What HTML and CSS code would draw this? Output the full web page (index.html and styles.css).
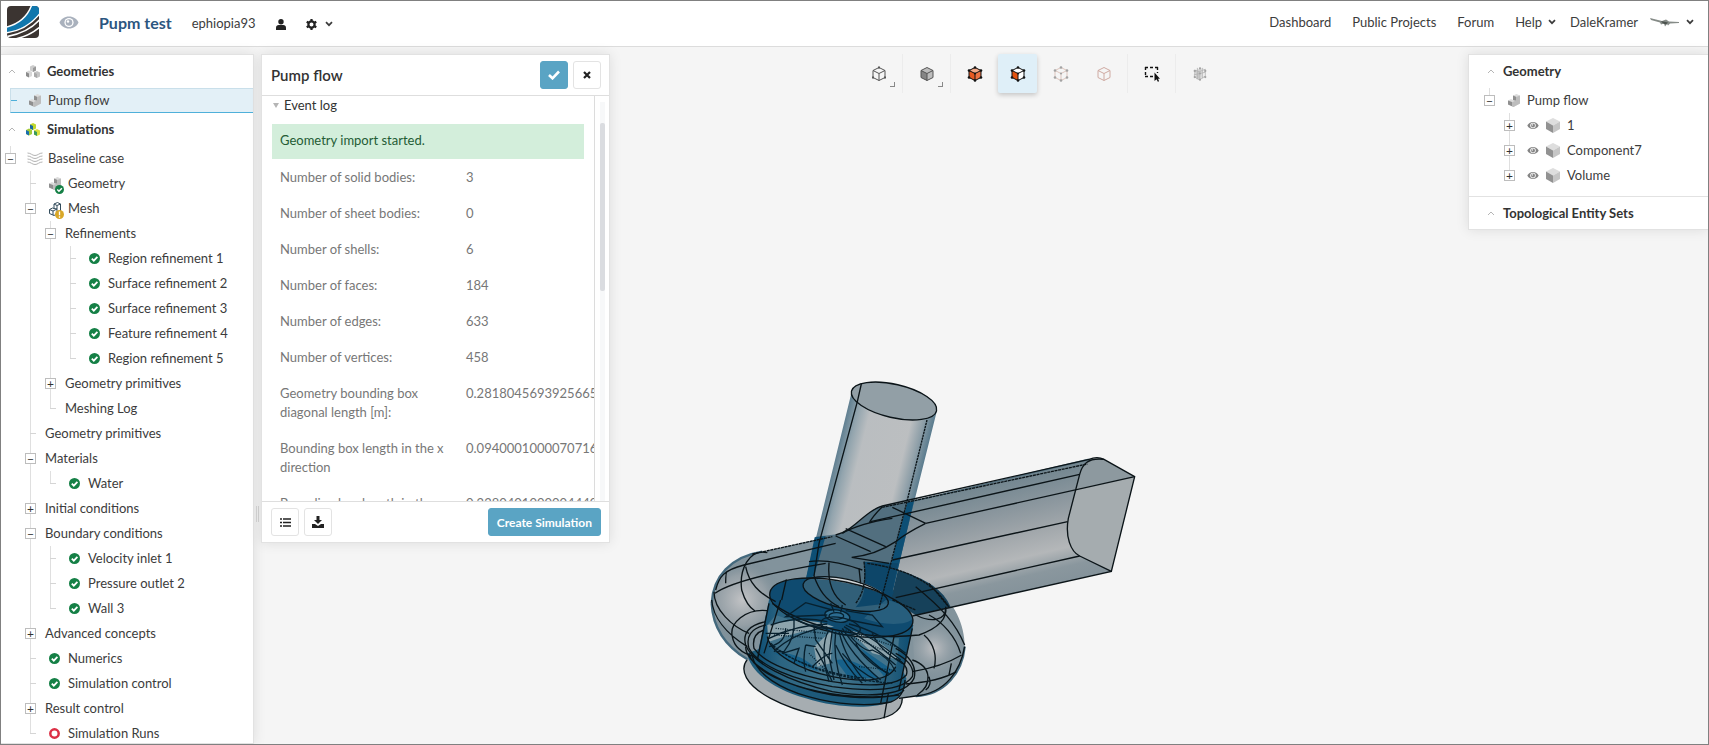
FILE: index.html
```html
<!DOCTYPE html>
<html lang="en">
<head>
  <meta charset="UTF-8" />
  <title>Pupm test</title>
  <link rel="stylesheet" href="styles.css">
</head>
<body>
  <!-- Icons -->
  <svg class="sprite" aria-hidden="true">
    <symbol id="chevron" viewBox="0 0 8 6"><path d="M1 1.200l3 3 3-3" fill="none" stroke="currentColor" stroke-width="1.700"/></symbol>
    <symbol id="caret" viewBox="0 0 8 5"><path d="M1 4l3-3 3 3" fill="none" stroke="#b5b5b5"/></symbol>
    <symbol id="eye" viewBox="0 0 20 13">
      <path d="M10 .5C5.500.5 2 3 .5 6.500 2 10 5.500 12.500 10 12.500s8-2.500 9.500-6C18 3 14.500.5 10 .5z" fill="currentColor"/>
      <circle cx="10" cy="6.500" r="4.600" fill="#fff"/><circle cx="10" cy="6.500" r="3.300" fill="currentColor"/><circle cx="9" cy="5.500" r="1.200" fill="#fff"/>
    </symbol>
    <symbol id="check" viewBox="0 0 11 11"><circle cx="5.500" cy="5.500" r="5.500" fill="#158046"/><path d="M2.800 5.600l2 2 3.600-3.700" fill="none" stroke="#fff" stroke-width="1.800"/></symbol>
    <symbol id="ring" viewBox="0 0 11 11"><circle cx="5.500" cy="5.500" r="4.200" fill="#fff" stroke="#dc2f45" stroke-width="2.500"/></symbol>
    <symbol id="cube" viewBox="0 0 14 15">
      <path d="M7 0l7 3.500-7 4-7-4z" fill="#dedede"/><path d="M0 3.500l7 4V15l-7-4z" fill="#929292"/><path d="M14 3.500l-7 4V15l7-4z" fill="#c6c6c6"/>
    </symbol>
    <symbol id="cubes" viewBox="0 0 14 13">
      <path d="M4 1.500L7 0l3 1.500v4L7 7 4 5.500z" fill="#ccc"/><path d="M7 3l3-1.500v4L7 7z" fill="#999"/>
      <path d="M0 7l3-1.500L6 7v4l-3 1.500L0 11z" fill="#d8d8d8"/><path d="M0 7l3 1.500v4L0 11z" fill="#8c8c8c"/>
      <path d="M8 7.500L11 6l3 1.500v4L11 13l-3-1.500z" fill="#c4c4c4"/><path d="M8 7.500L11 9v4l-3-1.500z" fill="#aaa"/>
    </symbol>
    <symbol id="cubes-color" viewBox="0 0 14 13">
      <path d="M4 1.500L7 0l3 1.500v4L7 7 4 5.500z" fill="#bfd730"/><path d="M4 1.500L7 3v4L4 5.500z" fill="#1768a5"/>
      <path d="M0 7l3-1.500L6 7v4l-3 1.500L0 11z" fill="#a5cb39"/><path d="M0 7l3 1.500v4L0 11z" fill="#1a6fae"/>
      <path d="M8 7.500L11 6l3 1.500v4L11 13l-3-1.500z" fill="#dbe042"/><path d="M8 7.500L11 9v4l-3-1.500z" fill="#3c9b5b"/>
    </symbol>
    <symbol id="part" viewBox="0 0 12 13">
      <path d="M5 1.500L8.500 0 12 1.500v8L5.500 13 0 10.500v-4l3-1.500 2 1z" fill="#dcdcdc"/>
      <path d="M5 1.500l3 1.300v4L5 6zM0 6.500L4 8v4.200L0 10.500z" fill="#8f8f8f"/><path d="M12 1.500L8 3v3.500L4 8.200v4.200l1.500.6L12 9.500z" fill="#bdbdbd"/>
    </symbol>
    <symbol id="mesh" viewBox="0 0 12 14">
      <path d="M5 2l3.500-1.500L11.500 2v8L5 13.500.5 11.500v-4l3-1.500L5 6.500zM5 2l3 1.500 3.500-1.500M8 3.500V7L4 9 .5 7.500M4 9v4M5 6.500L8 7M8 7v4.500" fill="none" stroke="#334c5c"/>
    </symbol>
    <symbol id="warn" viewBox="0 0 9 9"><circle cx="4.500" cy="4.500" r="4.500" fill="#d9a727"/><path d="M4.500 1.500v3.800M4.500 6.300v1.400" stroke="#fff" stroke-width="1.300"/></symbol>
    <symbol id="layers" viewBox="0 0 16 13">
      <path d="M.5 1C4 1 5 3.500 8 3.500S12 1 15.500 1M.5 4C4 4 5 6.500 8 6.500S12 4 15.500 4M.5 7C4 7 5 9.500 8 9.500S12 7 15.500 7M.5 10c3.500 0 4.500 2.500 7.500 2.500s4-2.500 7.500-2.500" fill="none" stroke="#b3b3b3"/>
    </symbol>
    <symbol id="wire" viewBox="0 0 16 16"><path d="M8 1.500l6 3v7l-6 3-6-3v-7zM2 4.500l6 3 6-3M8 7.500v7" fill="none" stroke="currentColor"/></symbol>
    <symbol id="wire-dots" viewBox="0 0 16 16">
      <path d="M7 .5h2v2H7zM1 10.500h2v2H1zM13 10.500h2v2h-2z" fill="currentColor"/>
    </symbol>
    <symbol id="dots" viewBox="0 0 16 16">
      <g fill="currentColor"><circle cx="8" cy="1.500" r="1.300"/><circle cx="2" cy="4.500" r="1.300"/><circle cx="14" cy="4.500" r="1.300"/><circle cx="2" cy="11.500" r="1.300"/><circle cx="14" cy="11.500" r="1.300"/><circle cx="8" cy="14.500" r="1.300"/><circle cx="8" cy="7.500" r="1.100"/></g>
    </symbol>
  </svg>

  <header class="topbar">
    <a href="#" class="logo" aria-label="Home">
      <svg width="32" height="32" viewBox="0 0 32 32">
        <defs><clipPath id="logo-clip"><rect width="32" height="32" rx="4"/></clipPath></defs>
        <g clip-path="url(#logo-clip)" fill="none" stroke="#fff" stroke-width="1.500">
          <rect width="32" height="32" fill="#3b3431" stroke="none"/>
          <path d="M-2 21.500C13 18 21 10 25-2h9v8C26 17 14 25-2 27z" fill="#1077ad"/>
          <path d="M-2 31C15 28 26 22 34 12"/>
          <path d="M8 33c10-2 18-6 26-13"/>
        </g>
      </svg>
    </a>
    <svg class="watch" width="20" height="13"><use href="#eye"/></svg>
    <h1>Pupm test</h1>
    <a href="#" class="owner">ephiopia93</a>
    <button class="plain user" aria-label="Members">
      <svg width="10" height="11" viewBox="0 0 10 11"><circle cx="5" cy="2.800" r="2.700" fill="#222"/><path d="M0 11V8.500C0 7 1.200 6 2.700 6h4.600C8.800 6 10 7 10 8.500V11z" fill="#222"/></svg>
    </button>
    <button class="plain gear" aria-label="Settings">
      <svg width="11" height="11" viewBox="0 0 11 11"><circle cx="5.500" cy="5.500" r="3.100" fill="none" stroke="#222" stroke-width="2.200"/><path d="M5.500 0v2M5.500 9v2M.7 2.700l1.800 1M8.500 7.300l1.800 1M.7 8.300l1.800-1M8.500 3.700l1.800-1" stroke="#222" stroke-width="2.200"/></svg>
      <svg width="8" height="6"><use href="#chevron"/></svg>
    </button>
    <nav>
      <a href="#">Dashboard</a>
      <a href="#">Public Projects</a>
      <a href="#">Forum</a>
      <a href="#">Help <svg width="8" height="6"><use href="#chevron"/></svg></a>
      <a href="#" class="account">DaleKramer
        <svg class="avatar" width="30" height="11" viewBox="0 0 30 11"><path d="M0 1l12 3 4-1.500 3 2 10 .5v1l-9 .5-2 2-1-1.500-2 2.500-1-3-3 1-1-2L1 3z" fill="#858b87"/><path d="M11 4l7 1.500-2 2-3-1z" fill="#4c524e"/></svg>
        <svg width="8" height="6"><use href="#chevron"/></svg>
      </a>
    </nav>
  </header>

  <main>
    <!-- Project tree -->
    <aside class="sidebar">
      <button class="section"><svg class="fold" width="8" height="5"><use href="#caret"/></svg><svg class="kind" width="14" height="13"><use href="#cubes"/></svg>Geometries</button>
      <a href="#" class="selected"><i class="dash"></i><svg width="12" height="13"><use href="#part"/></svg>Pump flow</a>
      <button class="section second"><svg class="fold" width="8" height="5"><use href="#caret"/></svg><svg class="kind" width="14" height="13"><use href="#cubes-color"/></svg>Simulations</button>
      <ul class="tree">
        <li>
          <div class="row"><button class="toggle" aria-label="Collapse">−</button><a href="#"><span class="icon"><svg width="16" height="13"><use href="#layers"/></svg></span>Baseline case</a></div>
          <ul>
            <li><div class="row leaf"><a href="#"><span class="icon"><svg width="12" height="13"><use href="#part"/></svg><svg class="badge" width="9" height="9"><use href="#check"/></svg></span>Geometry</a></div></li>
            <li>
              <div class="row"><button class="toggle" aria-label="Collapse">−</button><a href="#"><span class="icon"><svg width="12" height="14"><use href="#mesh"/></svg><svg class="badge" width="9" height="9"><use href="#warn"/></svg></span>Mesh</a></div>
              <ul>
                <li>
                  <div class="row"><button class="toggle" aria-label="Collapse">−</button><a href="#">Refinements</a></div>
                  <ul>
                    <li><div class="row leaf"><a href="#"><span class="icon"><svg width="11" height="11"><use href="#check"/></svg></span>Region refinement 1</a></div></li>
                    <li><div class="row leaf"><a href="#"><span class="icon"><svg width="11" height="11"><use href="#check"/></svg></span>Surface refinement 2</a></div></li>
                    <li><div class="row leaf"><a href="#"><span class="icon"><svg width="11" height="11"><use href="#check"/></svg></span>Surface refinement 3</a></div></li>
                    <li><div class="row leaf"><a href="#"><span class="icon"><svg width="11" height="11"><use href="#check"/></svg></span>Feature refinement 4</a></div></li>
                    <li><div class="row leaf"><a href="#"><span class="icon"><svg width="11" height="11"><use href="#check"/></svg></span>Region refinement 5</a></div></li>
                  </ul>
                </li>
                <li><div class="row"><button class="toggle" aria-label="Expand">+</button><a href="#">Geometry primitives</a></div></li>
                <li><div class="row leaf"><a href="#">Meshing Log</a></div></li>
              </ul>
            </li>
            <li><div class="row leaf"><a href="#">Geometry primitives</a></div></li>
            <li>
              <div class="row"><button class="toggle" aria-label="Collapse">−</button><a href="#">Materials</a></div>
              <ul>
                <li><div class="row leaf"><a href="#"><span class="icon"><svg width="11" height="11"><use href="#check"/></svg></span>Water</a></div></li>
              </ul>
            </li>
            <li><div class="row"><button class="toggle" aria-label="Expand">+</button><a href="#">Initial conditions</a></div></li>
            <li>
              <div class="row"><button class="toggle" aria-label="Collapse">−</button><a href="#">Boundary conditions</a></div>
              <ul>
                <li><div class="row leaf"><a href="#"><span class="icon"><svg width="11" height="11"><use href="#check"/></svg></span>Velocity inlet 1</a></div></li>
                <li><div class="row leaf"><a href="#"><span class="icon"><svg width="11" height="11"><use href="#check"/></svg></span>Pressure outlet 2</a></div></li>
                <li><div class="row leaf"><a href="#"><span class="icon"><svg width="11" height="11"><use href="#check"/></svg></span>Wall 3</a></div></li>
              </ul>
            </li>
            <li><div class="row"><button class="toggle" aria-label="Expand">+</button><a href="#">Advanced concepts</a></div></li>
            <li><div class="row leaf"><a href="#"><span class="icon"><svg width="11" height="11"><use href="#check"/></svg></span>Numerics</a></div></li>
            <li><div class="row leaf"><a href="#"><span class="icon"><svg width="11" height="11"><use href="#check"/></svg></span>Simulation control</a></div></li>
            <li><div class="row"><button class="toggle" aria-label="Expand">+</button><a href="#">Result control</a></div></li>
            <li><div class="row leaf"><a href="#"><span class="icon"><svg width="11" height="11"><use href="#ring"/></svg></span>Simulation Runs</a></div></li>
          </ul>
        </li>
      </ul>
    </aside>

    <div class="splitter"><span></span></div>

    <!-- Geometry details -->
    <section class="panel">
      <div class="panel-head">
        <h2>Pump flow</h2>
        <button class="btn primary" aria-label="Apply"><svg width="12" height="10" viewBox="0 0 12 10"><path d="M1 5l3.500 3.300L11 1.500" fill="none" stroke="#fff" stroke-width="2.600"/></svg></button>
        <button class="btn" aria-label="Close"><svg width="8" height="8" viewBox="0 0 8 8"><path d="M1 1l6 6M7 1L1 7" stroke="#222" stroke-width="2.200"/></svg></button>
      </div>
      <div class="panel-body">
        <div class="log">
          <button class="log-title"><svg width="6" height="5" viewBox="0 0 6 5"><path d="M0 0h6L3 5z" fill="#b5b5b5"/></svg>Event log</button>
          <p class="notice">Geometry import started.</p>
          <table>
            <tr><th>Number of solid bodies:</th><td>3</td></tr>
            <tr><th>Number of sheet bodies:</th><td>0</td></tr>
            <tr><th>Number of shells:</th><td>6</td></tr>
            <tr><th>Number of faces:</th><td>184</td></tr>
            <tr><th>Number of edges:</th><td>633</td></tr>
            <tr><th>Number of vertices:</th><td>458</td></tr>
            <tr><th>Geometry bounding box diagonal length [m]:</th><td>0.2818045693925665</td></tr>
            <tr><th>Bounding box length in the x direction</th><td>0.0940001000070716</td></tr>
            <tr><th>Bounding box length in the y direction</th><td>0.2280401000004440</td></tr>
          </table>
        </div>
        <div class="scrollbar"><span></span></div>
      </div>
      <div class="panel-foot">
        <button class="btn" aria-label="List"><svg width="11" height="9" viewBox="0 0 11 9"><path d="M0 1h2M0 4.500h2M0 8h2M3 1h8M3 4.500h8M3 8h8" stroke="#222" stroke-width="1.500"/></svg></button>
        <button class="btn" aria-label="Download"><svg width="12" height="12" viewBox="0 0 12 12"><path d="M4.500 0h3v4H10L6 8 2 4h2.500z" fill="#222"/><path d="M0 8h3l3 2 3-2h3v4H0z" fill="#222"/></svg></button>
        <button class="btn primary create">Create Simulation</button>
      </div>
    </section>

    <!-- 3D view -->
    <section class="viewport">
      <div class="toolbar">
        <div class="group"><button class="tool corner" aria-label="Camera view"><svg width="16" height="16" viewBox="0 0 16 16"><use href="#wire"/><use href="#wire-dots"/></svg></button></div>
        <div class="group"><button class="tool corner" aria-label="Render mode"><svg width="16" height="16" viewBox="0 0 16 16"><path d="M8 1.500l6 3v7l-6 3-6-3v-7z" fill="#bdbdbd"/><path d="M2 4.500l6 3v7l-6-3z" fill="#858585"/><use href="#wire"/></svg></button></div>
        <div class="group wide">
          <button class="tool" aria-label="Select volumes"><svg width="16" height="16" viewBox="0 0 16 16"><path d="M8 1.500l6 3v7l-6 3-6-3v-7z" fill="#ee7444"/><path d="M8 1.500l6 3-6 3-6-3z" fill="#f3aa89"/><path d="M2 4.500l6 3v7l-6-3z" fill="#e75a22"/><use href="#wire"/><use href="#dots"/></svg></button>
          <button class="tool active" aria-label="Select faces"><svg width="16" height="16" viewBox="0 0 16 16"><path d="M8 1.500l6 3v7l-6 3-6-3v-7z" fill="#fff"/><path d="M2 4.500l6 3v7l-6-3z" fill="#e2520f"/><use href="#wire"/><use href="#dots"/></svg></button>
          <button class="tool off" aria-label="Select edges"><svg width="16" height="16" viewBox="0 0 16 16"><path d="M8 1.500l6 3v7l-6 3-6-3v-7zM2 4.500l6 3 6-3M8 7.500v7" fill="none" stroke="#ddc5bd"/><use href="#dots"/></svg></button>
          <button class="tool pale" aria-label="Select vertices"><svg width="16" height="16"><use href="#wire"/></svg></button>
        </div>
        <div class="group"><button class="tool" aria-label="Box selection"><svg width="16" height="16" viewBox="0 0 16 16"><path d="M1 1.500h13M1 10.500h9M1.500 1v10M13.500 1v6" fill="none" stroke="#111" stroke-width="1.400" stroke-dasharray="3 2"/><path d="M10.500 6.500v8.500l2-1.700L14 16l1-1-1-2.200h2z" fill="#111"/></svg></button></div>
        <div class="group"><button class="tool off" aria-label="Clip"><svg width="14" height="14" viewBox="0 0 16 16"><path d="M2 4l8-2.500V12l-6 2z" fill="#d0d0d0"/><path d="M2 3.500l5 2v9l-5-3zM7 5.500l7-3v8l-7 4M5 1v13M11 1v12M1 9l13-3" fill="none" stroke="#b5b5b5"/><use href="#dots"/></svg></button></div>
      </div>

      <svg class="model" viewBox="-267 -798 2574 1920" role="img" aria-label="Pump geometry">
        <defs>
          <linearGradient id="pipe" gradientUnits="userSpaceOnUse" x1="400" y1="300" x2="655" y2="363">
            <stop offset="0" stop-color="#56778a"/><stop offset=".12" stop-color="#8c9fa9"/><stop offset=".26" stop-color="#b6babd"/><stop offset=".74" stop-color="#b8bbbd"/><stop offset=".88" stop-color="#8799a3"/><stop offset="1" stop-color="#4e7286"/>
          </linearGradient>
          <linearGradient id="duct" gradientUnits="userSpaceOnUse" x1="850" y1="340" x2="930" y2="680">
            <stop offset="0" stop-color="#71858f"/><stop offset=".3" stop-color="#8d989f"/><stop offset=".5" stop-color="#a1a7ab"/><stop offset=".7" stop-color="#b4b7b9"/><stop offset=".86" stop-color="#8a979e"/><stop offset="1" stop-color="#84929a"/>
          </linearGradient>
          <radialGradient id="left-lobe" gradientUnits="userSpaceOnUse" cx="130" cy="690" r="125">
            <stop offset="0" stop-color="#c2c3c5"/><stop offset=".6" stop-color="#99a2a8" stop-opacity=".8"/><stop offset="1" stop-color="#71858f" stop-opacity="0"/>
          </radialGradient>
          <radialGradient id="right-lobe" gradientUnits="userSpaceOnUse" cx="705" cy="835" r="110">
            <stop offset="0" stop-color="#bfc0c3"/><stop offset="1" stop-color="#71858f" stop-opacity="0"/>
          </radialGradient>
          <linearGradient id="drum" x1="0" x2="1">
            <stop offset="0" stop-color="#0d4e74"/><stop offset=".15" stop-color="#2b6481"/><stop offset=".5" stop-color="#41748b"/><stop offset=".85" stop-color="#275f7c"/><stop offset="1" stop-color="#0b4c72"/>
          </linearGradient>
        </defs>

        <!-- lower flange -->
        <path d="M145 868C120 900 140 945 215 985C300 1030 410 1052 490 1051C570 1050 610 1025 610 985L600 900z" fill="#a6adb1"/>
        <path d="M145 868C120 900 140 945 215 985C300 1030 410 1052 490 1051C570 1050 610 1025 610 985" class="edge"/>

        <!-- volute -->
        <path d="M38 700C42 620 95 560 190 545L410 495L450 545L700 640C770 700 798 770 797 830C790 905 740 975 650 978L600 985C400 970 240 930 145 868C70 820 40 760 38 700z" fill="#82939c"/>
        <path d="M38 700C42 620 95 560 190 545L410 495L450 545L700 640C770 700 798 770 797 830C790 905 740 975 650 978L600 985C400 970 240 930 145 868C70 820 40 760 38 700z" fill="url(#left-lobe)"/>
        <path d="M640 760L740 700L797 830C790 905 740 975 650 978z" fill="url(#right-lobe)"/>
        <path d="M38 700C42 620 95 560 190 545M38 700C42 785 90 835 145 868M797 830C790 905 740 975 650 978" fill="none" stroke="#44697d" stroke-width="7"/>

        <!-- outlet duct -->
        <path d="M410 495C470 480 500 420 550 408L645 393L1170 268Q1200 256 1307 320L1237 604L640 738L470 590z" fill="url(#duct)"/>
        <path d="M1142 313C1155 275 1180 262 1215 268L1307 320L1237 604L1140 557C1100 530 1098 475 1108 440z" fill="#a5acaf"/>
        <path d="M1142 313C1155 275 1180 262 1215 268L1307 320L1132 356z" fill="#8d999f"/>

        <!-- suction pipe -->
        <path d="M457 70C450 30 560 28 640 57C700 80 718 105 713 125L572 690C560 730 440 715 345 660L320 630z" fill="url(#pipe)" opacity=".94"/>
        <ellipse cx="585" cy="93" rx="131" ry="50" transform="rotate(13 585 93)" fill="#929fa6" class="edge"/>

        <!-- overlap of pipe and duct -->
        <path d="M350 500L420 492C480 470 510 415 550 408L645 393L575 690L540 720L320 630z" fill="#526f7f"/>
        <path d="M347 502L380 498L345 618L320 630zM625 398L645 393L575 690L540 718L555 660z" fill="#0d4f75"/>
        <path d="M495 575L597 580L575 690L470 700C500 660 500 610 495 575z" fill="#0d4669"/>
        <path d="M597 600C680 625 735 660 755 712L650 735L575 690z" fill="#16415a"/>
        <path d="M645 393L1170 268" stroke="#55717f" stroke-width="5"/>

        <!-- drum -->
        <path d="M145 850C150 900 215 955 320 985C420 1018 530 1015 575 995C605 982 620 965 622 925L600 880L200 830z" fill="#1d5a7a"/>
        <path d="M212 680L172 870C240 960 500 1010 600 965L643 765z" fill="url(#drum)"/>
        <ellipse cx="427" cy="713" rx="219" ry="78" transform="rotate(12 427 713)" fill="#0f4b70"/>
        <ellipse cx="440" cy="672" rx="131" ry="44" transform="rotate(13 440 672)" fill="#315f78"/>
        <path d="M495 632L585 665L570 700L470 712C490 690 500 660 495 632z" fill="#0d4669"/>
        <path d="M345 626C430 612 520 640 558 675C500 648 420 630 345 626z" fill="#cfd3d5"/>
        <path d="M205 765L230 735C300 760 420 800 600 805L595 870C590 930 480 945 390 920C300 900 190 850 205 765z" fill="#42738b"/>
        <path d="M205 765Q320 735 405 770Q300 780 210 815zM345 830L400 780L395 880L355 890zM450 780Q540 800 600 870L520 850z" fill="#8da4ad"/>
        <path d="M225 850Q300 840 360 905L300 885zM410 870Q470 860 540 925L450 925zM480 830L580 900L560 925z" fill="#17618a"/>
        <path d="M560 690C600 695 630 715 642 745C625 770 540 765 495 745z" fill="#326783" opacity=".7"/>

        <!-- pipe edges -->
        <g class="edge">
          <path d="M487 42L475 95L360 520L345 618"/>
          <path d="M684 150L620 410L540 715" stroke-dasharray="7 2"/>
          <ellipse cx="440" cy="672" rx="131" ry="44" transform="rotate(13 440 672)"/>
          <ellipse cx="427" cy="713" rx="219" ry="78" transform="rotate(12 427 713)"/>
          <path d="M345 618C360 660 380 690 420 710M390 578C385 640 400 680 440 705M480 595L485 640M330 575Q390 565 490 600M262 628L248 690"/>
        </g>

        <!-- duct edges -->
        <g class="edge">
          <path d="M410 495C470 480 500 420 550 408L1170 268Q1195 258 1215 268L1307 320L1237 604L640 738"/>
          <path d="M550 412L1165 282" stroke-dasharray="9 2"/>
          <path d="M515 455L1142 313M680 460L1307 320" />
          <path d="M580 570L1106 455M590 683L1142 558"/>
          <path d="M1215 268C1165 262 1150 285 1142 313L1108 445C1098 500 1115 545 1142 558L1237 604"/>
          <path d="M550 410Q520 440 510 460M580 412L680 460M680 460Q620 490 590 515Q530 555 458 562M458 562L570 580M440 476L560 530M410 498L515 545M430 490Q480 460 580 445"/>
          <path d="M495 575C500 620 500 660 470 700M505 580C610 595 700 630 750 712M580 690L650 720M690 640L750 712" stroke-dasharray="9 2"/>
        </g>

        <!-- volute edges -->
        <g class="edge">
          <path d="M50 660C60 620 75 600 135 585L410 520M80 640Q80 605 85 605M48 670Q110 625 380 580"/>
          <path d="M205 548C150 535 120 600 128 660C140 700 155 715 168 723M140 590C150 640 180 670 230 695" />
          <path d="M160 552L400 500" stroke-dasharray="9 2"/>
          <path d="M38 690C42 740 80 790 145 830M45 665C45 720 100 770 150 790M100 800C90 760 140 715 205 722M100 800C105 830 130 850 165 860" />
          <path d="M740 710C745 740 730 770 660 795C530 810 340 785 220 700M650 735C700 760 740 750 740 715"/>
          <path d="M797 825C770 760 730 715 650 650M785 850C770 800 730 755 690 735M675 795C705 820 715 860 705 895M757 880L750 915M640 905Q730 890 788 855M620 942Q720 935 772 905M640 870C700 890 700 945 655 975M690 920Q700 945 680 960"/>
          <path d="M797 830C785 900 740 970 650 978L600 985"/>
        </g>

        <!-- rings -->
        <g class="edge">
          <path d="M200 755C150 765 130 790 140 825C160 880 270 935 400 965C520 985 620 975 645 925C655 890 630 855 590 835"/>
          <path d="M200 765C155 775 140 800 150 835C180 890 290 930 400 950C510 965 610 965 640 920C648 890 620 865 590 850"/>
          <path d="M195 780C165 790 160 810 165 835C195 880 290 915 400 935C500 950 590 950 622 915C630 890 610 875 590 865"/>
          <path d="M205 800C215 850 300 900 400 920C490 938 570 935 590 890"/>
          <path d="M140 830C140 880 250 950 400 975C500 988 600 985 615 960M150 850C170 940 440 1000 600 975M160 860C190 970 440 1025 575 996C605 985 615 965 618 930"/>
          <path d="M210 700L175 870M640 775L600 960M585 800L545 1000M568 970L555 1045M245 690L195 850"/>
        </g>

        <!-- impeller -->
        <g class="edge blade">
          <ellipse cx="415" cy="738" rx="38" ry="18" transform="rotate(10 415 738)" class="hub"/>
          <ellipse cx="412" cy="738" rx="22" ry="10"/>
          <ellipse cx="425" cy="768" rx="60" ry="25" transform="rotate(12 425 768)"/>
          <path d="M400 720L320 698L260 740L385 735M440 722L520 735L550 770L450 750M395 700L405 725M430 705L425 728"/>
          <path d="M385 755Q300 735 215 765M385 762Q290 765 210 805M385 770Q280 790 225 845M390 775L345 770L350 810L400 880M390 780Q360 830 390 935M400 780L390 860L405 930M410 785Q400 860 430 945"/>
          <path d="M420 785Q440 870 500 935M425 780Q450 850 545 930M430 775Q470 840 570 915M435 770Q500 810 590 885M440 765Q520 800 605 870M450 762Q530 780 620 850"/>
          <path d="M285 750Q290 800 255 845L230 845M260 775Q260 820 210 830M320 825Q310 870 320 905M350 835Q370 870 400 935M320 825L350 830M270 790L200 790M285 745Q330 770 380 775"/>
          <path d="M410 825Q440 890 490 940M430 850Q470 900 540 935M470 820Q500 880 570 910M520 790Q540 840 610 880M455 800Q500 850 520 840Q570 860 590 905M250 850L300 835L285 880M340 890Q380 850 400 850"/>
          <path d="M230 775L380 790M225 795L370 805M440 780L590 830M445 795L575 850M480 890L580 900M330 850L385 905" stroke-dasharray="3 4"/>
          <path d="M215 820Q330 920 580 940M220 830Q330 905 500 925" stroke-dasharray="8 3"/>
        </g>
      </svg>
    </section>

    <!-- Scene tree -->
    <aside class="scene">
      <button class="section"><svg class="fold" width="8" height="5"><use href="#caret"/></svg>Geometry</button>
      <ul class="tree">
        <li>
          <div class="row"><button class="toggle" aria-label="Collapse">−</button><a href="#"><span class="icon"><svg width="12" height="13"><use href="#part"/></svg></span>Pump flow</a></div>
          <ul>
            <li><div class="row"><button class="toggle" aria-label="Expand">+</button><a href="#"><svg class="show" width="12" height="9"><use href="#eye"/></svg><svg class="solid" width="14" height="15"><use href="#cube"/></svg>1</a></div></li>
            <li><div class="row"><button class="toggle" aria-label="Expand">+</button><a href="#"><svg class="show" width="12" height="9"><use href="#eye"/></svg><svg class="solid" width="14" height="15"><use href="#cube"/></svg>Component7</a></div></li>
            <li><div class="row"><button class="toggle" aria-label="Expand">+</button><a href="#"><svg class="show" width="12" height="9"><use href="#eye"/></svg><svg class="solid" width="14" height="15"><use href="#cube"/></svg>Volume</a></div></li>
          </ul>
        </li>
      </ul>
      <button class="section sets"><svg class="fold" width="8" height="5"><use href="#caret"/></svg>Topological Entity Sets</button>
    </aside>
  </main>
</body>
</html>
```
FILE: styles.css
```css
*{margin:0;padding:0;box-sizing:border-box}
body{
  display:flex;
  flex-direction:column;
  height:100vh;
  border:1px solid #808080;
  background-color:#f5f5f5;
  color:#3c3c3c;
  font-family:'Lato',sans-serif;
  font-size:13px;
  line-height:19px;
  overflow:hidden;
}
a{color:inherit;text-decoration:none}
button{font:inherit;color:inherit;background:none;border:none;cursor:pointer}
svg{display:block;flex:none}
ul{list-style:none}
.sprite{position:absolute;width:0;height:0}

/* ---------- Top bar ---------- */
.topbar{display:flex;align-items:center;flex:none;height:46px;padding:0 14px 3px 6px;background-color:#fff;border-bottom:1px solid #dcdcdc}
.watch{margin-left:20px;color:#a9b1bd}
.topbar h1{margin-left:20px;font-size:16px;font-weight:700;color:#2c5680}
.owner{margin-left:20px;padding-top:3px}
.user{margin-left:20px;padding-top:4px}
.gear{display:flex;align-items:center;gap:8px;margin-left:20px;padding-top:4px}
.topbar nav{display:flex;align-items:center;gap:21px;margin-left:auto}
.topbar nav a{display:flex;align-items:center;gap:6px}
.topbar nav .account{margin-left:-7px}
.avatar{margin-left:6px}

/* ---------- Layout ---------- */
main{display:flex;flex:1;align-items:flex-start;min-height:0;padding-top:7px}
.sidebar,.panel,.scene{flex:none;background-color:#fff;border:1px solid #e2e2e2;box-shadow:0 0 12px rgba(0,0,0,.1)}
.sidebar{align-self:stretch;width:253px;border-left:none;overflow:hidden}
.splitter{width:7px;padding:452px 0 0 2px}
.splitter span{display:block;width:3px;height:16px;border:1px solid #d2d2d2;border-width:0 1px}

/* ---------- Trees ---------- */
.section{display:flex;align-items:center;width:100%;height:33px;padding-left:7px;font-weight:700;color:#333;text-align:left}
.section .kind{margin:0 7px 0 10px}
.selected{display:flex;align-items:center;height:25px;margin-left:9px;background-color:#e3f0f7;border:1px solid #c9dfea;border-right:none;border-bottom-color:#4fb0da}
.selected .dash{width:6px;height:1px;margin-right:12px;background-color:#4fb0da}
.selected svg{margin-right:7px}
.tree ul{padding-left:20px}
.tree li{background:linear-gradient(#dfdfdf,#dfdfdf) 9px 0/1px 100% no-repeat}
.tree li:last-child{background-size:1px 13px}
.row{display:flex;align-items:center;height:25px}
.row a{display:flex;align-items:center;margin-left:9px}
.toggle{width:11px;height:11px;margin-left:4px;border:1px solid #bdbdbd;background-color:#fff;font-size:12px;line-height:9px;text-align:center;color:#333}
.leaf::before{content:'';width:6px;height:1px;margin-left:9px;background-color:#d5d5d5}
.leaf a{margin-left:9px}
.icon{display:flex;align-items:center;justify-content:center;position:relative;width:19px;height:20px;margin-right:4px}
.badge{position:absolute;right:0;bottom:0}

/* ---------- Details panel ---------- */
.panel{width:349px}
.panel-head{display:flex;align-items:center;gap:5px;height:41px;padding:0 8px 0 9px;border-bottom:1px solid #dedede}
.panel-head h2{flex:1;font-size:15px;font-weight:600;color:#333}
.btn{display:flex;align-items:center;justify-content:center;width:28px;height:28px;border:1px solid #e3e3e3;border-radius:3px;background-color:#fff}
.primary{border-color:#5aa4c4;background-color:#5aa4c4;color:#fff}
.panel-body{display:flex;height:405px}
.log{width:333px;padding:0 10px;border-right:1px solid #dcdcdc;overflow:hidden}
.log-title{display:flex;align-items:center;gap:5px;height:28px;padding:0 0 10px 1px;color:#333}
.notice{height:35px;margin-bottom:1px;padding:7px 8px;background-color:#d3eedb;color:#245c34}
.log table{width:100%;table-layout:fixed;border-collapse:collapse;color:#777}
.log th{width:186px;padding:8px 8px 9px;font-weight:400;text-align:left;vertical-align:top}
.log td{padding:8px 0 9px 8px;vertical-align:top;white-space:nowrap}
.scrollbar{width:5px;margin:6px 0 0 5px;background-color:#f7f8f9}
.scrollbar span{display:block;height:168px;margin-top:21px;border-radius:2px;background-color:#dadce0}
.panel-foot{display:flex;align-items:center;gap:5px;height:41px;padding:0 8px 0 9px;border-top:1px solid #dedede}
.create{width:auto;margin-left:auto;padding:0 8px;font-size:12px;font-weight:700}

/* ---------- 3D view ---------- */
.viewport{display:flex;flex-direction:column;align-items:center;align-self:stretch;flex:1;min-width:0}
.toolbar{display:flex;height:50px}
.group{height:39px;padding:0 2px;border-right:1px solid #ececec}
.group:last-child{border-right:none}
.wide{display:flex;padding:0 2px}
.tool{display:flex;align-items:center;justify-content:center;width:43px;height:39px;color:#111}
.wide .tool{width:39px;margin:0 2px}
.wide .active{background-color:#dfeff8;box-shadow:0 2px 5px rgba(0,0,0,.2);border-radius:2px}
.wide .off,.off{color:#a3a3a3}
.pale{color:#cfaaa2}
.corner{position:relative;color:#555}
.corner::after{content:'';position:absolute;right:5px;bottom:6px;width:4px;height:4px;border:1px solid #888;border-width:0 1px 1px 0}
.model{flex:1;width:100%;min-height:0}
.edge{fill:none;stroke:#0b1418;stroke-width:4}
ellipse[fill].edge{fill:#929fa6}
.blade{stroke:#07202e}
.hub{fill:#2b6c90}

/* ---------- Scene tree ---------- */
.scene{width:240px;border-right:none}
.scene .section{padding-left:18px}
.scene .fold{margin-right:8px}
.scene .tree{padding:0 0 8px 11px}
.show{margin-right:7px;margin-left:3px;color:#858585}
.solid{margin-right:7px}
.sets{border-top:1px solid #e2e2e2}
```
